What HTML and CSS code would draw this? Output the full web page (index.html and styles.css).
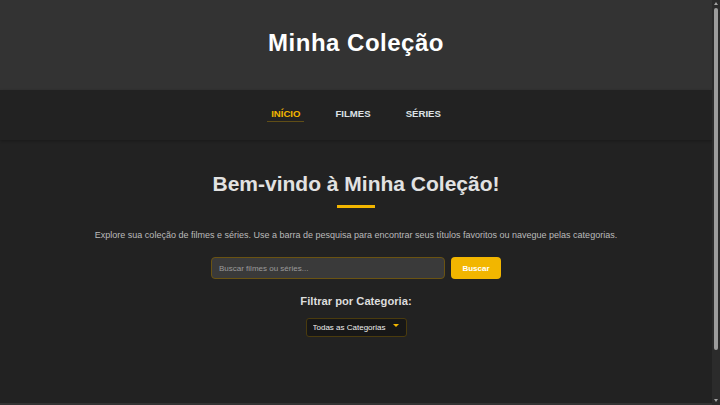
FILE: index.html
```html
<!DOCTYPE html>
<html lang="pt-BR">
<head>
  <meta charset="UTF-8" />
  <meta name="viewport" content="width=device-width, initial-scale=1.0"/>
  <title>Minha Coleção</title>
  <link rel="stylesheet" href="styles.css">
</head>
<body>
  <div class="page">
    <header class="site-header">
      <h1>Minha Coleção</h1>
    </header>

    <nav class="site-nav">
      <a href="#" class="active">Início</a>
      <a href="#">Filmes</a>
      <a href="#">Séries</a>
    </nav>

    <main class="home">
      <h2>Bem-vindo à Minha Coleção!</h2>
      <div class="title-bar"></div>
      <p class="intro">Explore sua coleção de filmes e séries. Use a barra de pesquisa para encontrar seus títulos favoritos ou navegue pelas categorias.</p>

      <form class="search-row" onsubmit="return false;">
        <input type="text" placeholder="Buscar filmes ou séries...">
        <button type="submit">Buscar</button>
      </form>

      <h3>Filtrar por Categoria:</h3>
      <div class="select-wrap">
        <select>
          <option>Todas as Categorias</option>
          <option>Ação</option>
          <option>Comédia</option>
          <option>Drama</option>
          <option>Terror</option>
        </select>
      </div>
    </main>

    <footer class="site-footer"></footer>
  </div>

  <!-- window scrollbar, drawn by hand -->
  <div class="scrollbar">
    <span class="arrow up"></span>
    <span class="thumb"></span>
    <span class="arrow down"></span>
  </div>
</body>
</html>
```

FILE: styles.css
```css
:root {
  color-scheme: dark;
}

body {
  margin: 0;
  height: 100vh;
  overflow: hidden;
  display: flex;
  font-family: "Liberation Sans", Arial, sans-serif;
  background: #222;
  color: #ddd;
}

.page {
  flex: 1;
  overflow: hidden;
}

.scrollbar {
  width: 8px;
  flex-shrink: 0;
  display: flex;
  flex-direction: column;
  align-items: center;
  background: #2b2b2b;
}

.scrollbar .arrow {
  width: 0;
  height: 0;
  border-left: 2px solid transparent;
  border-right: 2px solid transparent;
}

.scrollbar .up {
  margin-top: 2px;
  border-bottom: 3px solid #a3a3a3;
}

.scrollbar .down {
  margin-top: auto;
  margin-bottom: 3px;
  border-top: 3px solid #a3a3a3;
}

.scrollbar .thumb {
  width: 4px;
  height: 342px;
  margin-top: 3px;
  border-radius: 2px;
  background: #9c9c9c;
}

.site-header {
  background: #333;
  text-align: center;
  padding: 28px 0 33px;
}

.site-header h1 {
  margin: 0;
  font-size: 24px;
  line-height: 29px;
  letter-spacing: 0.5px;
  color: #fff;
}

.site-nav {
  display: flex;
  justify-content: center;
  align-items: center;
  gap: 27px;
  height: 50px;
  background: #222;
  box-shadow: 0 1px 3px rgba(0, 0, 0, 0.25);
}

.site-nav a {
  font-size: 9.6px;
  line-height: 11px;
  font-weight: bold;
  text-transform: uppercase;
  text-decoration: none;
  color: #dde2e6;
  padding: 0 4px 2px;
  border-bottom: 1px solid transparent;
}

.site-nav a.active {
  color: #f2b600;
  border-bottom-color: rgba(242, 182, 0, 0.3);
}

.home {
  height: 263px;
  box-sizing: border-box;
  padding: 32px 20px 0;
  text-align: center;
}

.home h2 {
  margin: 0;
  font-size: 21px;
  line-height: 24px;
  color: #e2e2e2;
}

.title-bar {
  width: 38px;
  height: 3px;
  margin: 9px auto 0;
  background: #f2b600;
}

.intro {
  margin: 20px 0 0;
  font-size: 9px;
  line-height: 14px;
  color: #bbb;
}

.search-row {
  display: flex;
  justify-content: center;
  gap: 6px;
  margin-top: 15px;
}

.search-row input {
  width: 234px;
  height: 22px;
  box-sizing: border-box;
  padding: 0 7px;
  background: #3a3a3a;
  border: 1px solid #6a5312;
  border-radius: 4px;
  color: #eee;
  font-family: inherit;
  font-size: 8px;
}

.search-row input::placeholder {
  color: #9a9a9a;
}

.search-row button {
  width: 50px;
  height: 22px;
  background: #f2b600;
  border: none;
  border-radius: 4px;
  color: #fff;
  font-family: inherit;
  font-size: 8px;
  font-weight: bold;
  cursor: pointer;
}

.home h3 {
  margin: 15px 0 0;
  font-size: 11.2px;
  line-height: 15px;
  color: #ddd;
}

.select-wrap {
  position: relative;
  display: inline-block;
  margin-top: 7px;
}

.select-wrap select {
  appearance: none;
  height: 19px;
  padding: 0 20px 0 6px;
  background: #171717;
  border: 1px solid #4a3b0e;
  border-radius: 3px;
  color: #eee;
  font-family: inherit;
  font-size: 8px;
  cursor: pointer;
}

.select-wrap::after {
  content: "";
  position: absolute;
  right: 8px;
  top: 8px;
  border-left: 3px solid transparent;
  border-right: 3px solid transparent;
  border-top: 3px solid #f2b600;
  pointer-events: none;
}

.site-footer {
  height: 57px;
  background: #333;
}
```
